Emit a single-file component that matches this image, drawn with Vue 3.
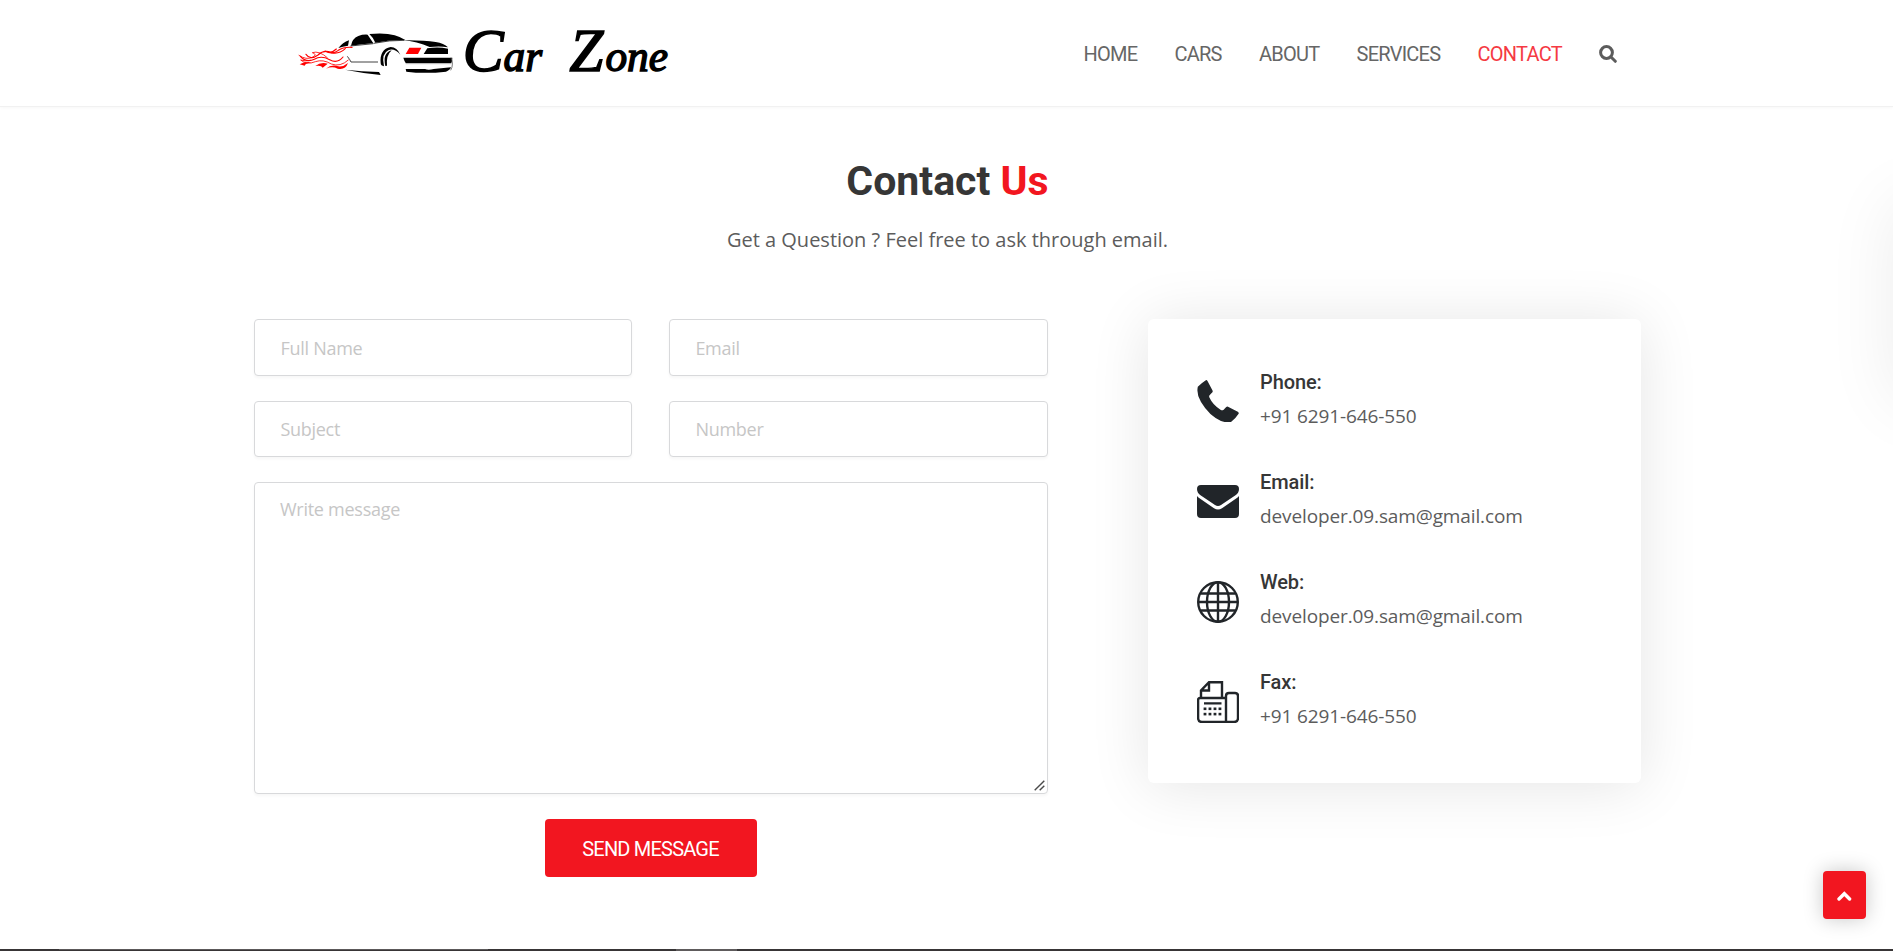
<script setup>
const links = ['HOME', 'CARS', 'ABOUT', 'SERVICES', 'CONTACT']
const fields = ['Full Name', 'Email', 'Subject', 'Number']
const contacts = [
  { icon: 'phone', label: 'Phone:', value: '+91 6291-646-550' },
  { icon: 'mail', label: 'Email:', value: 'developer.09.sam@gmail.com' },
  { icon: 'web', label: 'Web:', value: 'developer.09.sam@gmail.com' },
  { icon: 'fax', label: 'Fax:', value: '+91 6291-646-550' },
]
const dots = [0, 14.4, 29, 43.4]
</script>

<template>
  <div class="page">
    <header class="header">
      <svg class="logo" viewBox="0 0 1170 180" aria-label="Car Zone">
        <g fill="#000">
          <path d="M145 84 Q158 68 177 61 L174 77 Q158 79 145 84Z" />
          <path d="M183 77 Q186 56 205 48 Q218 43 233 44 L250 70 Q215 73 183 77Z" />
          <path d="M238 42 Q285 37 314 46 Q334 52 346 60 Q302 58 256 68 Q251 54 238 42Z" />
          <path d="M337 61 Q400 60 437 66 Q462 70 474 82 Q452 78 419 81 Q382 64 337 61Z" />
          <path d="M412 85 Q445 80 474 86 V102 H401Z" />
          <path d="M340 113 H487 Q487 123 484 129 H347 Q343 123 340 113Z" />
          <path d="M347 147 H405 Q415 152 431 147 L483 142 Q480 151 468 155 Q405 162 349 155Z" />
          <path d="M165 149 Q215 154 267 156 L272 165 Q220 160 165 149Z" />
          <path d="M272 129 Q268 88 302 81 Q321 81 331 104 Q312 83 295 91 Q273 101 282 139 Q272 137 272 129Z" />
          <path d="M286 138 Q277 99 305 91 Q288 106 291 137Z" />
        </g>
        <g fill="none" stroke="#111" stroke-width="2.4">
          <path d="M172 109 Q180 119 183 126 H264 M181 78 L250 71 M251 70 Q300 60 343 61" />
          <path d="M483 113 Q492 133 482 151" stroke="#555" />
          <path d="M347 131 H484" stroke="#999" />
        </g>
        <path d="M358 83 H394 L384 102 H347Z" fill="#f00" />
        <g fill="none" stroke="#f00" stroke-linecap="round">
          <path d="M186 82 Q161 80 145 91 Q128 105 104 93 Q123 103 139 87" stroke-width="3.4" />
          <path d="M166 86 Q146 104 124 98 Q102 88 84 105 Q61 122 48 103" stroke-width="3.4" />
          <path d="M159 111 Q142 132 119 119 Q93 105 73 118 Q49 129 31 109" stroke-width="3.4" />
          <path d="M112 113 Q87 91 67 98 Q84 104 67 112 Q49 121 27 106" stroke-width="2.4" />
          <path d="M175 120 Q151 142 124 132 Q99 117 76 125 Q50 136 32 120 Q46 125 62 121" stroke-width="2.5" />
        </g>
        <g fill="#f00">
          <path d="M29 133 Q45 124 65 127 Q48 129 44 137Z" />
          <path d="M76 138 Q92 125 113 131 L98 143 Q94 135 76 138Z" />
          <path d="M108 146 Q124 132 145 139 Q160 141 174 129 Q166 151 143 146 Q127 138 108 146Z" />
        </g>
        <text class="logo-word" x="518" y="152"><tspan class="cap">C</tspan><tspan>ar</tspan></text>
        <text class="logo-word" x="838" y="152"><tspan class="cap">Z</tspan><tspan dx="6">one</tspan></text>
      </svg>
      <nav class="nav">
        <a v-for="l in links" :key="l" :class="{ active: l === 'CONTACT' }">{{ l }}</a>
        <svg class="search" viewBox="0 0 18 18"><circle cx="7.5" cy="7.5" r="5.9" /><path d="M12 12 L16.3 16.3" /></svg>
      </nav>
    </header>

    <main class="main">
      <h1>Contact <span>Us</span></h1>
      <p class="lead">Get a Question ? Feel free to ask through email.</p>
      <div class="columns">
        <form class="form" @submit.prevent>
          <input v-for="f in fields" :key="f" type="text" :placeholder="f" />
          <div class="message">
            <textarea placeholder="Write message"></textarea>
            <svg class="grip" viewBox="0 0 11 11"><path d="M.7 10.3 L10.3 .7 M5.7 10.3 L10.3 5.7" /></svg>
          </div>
          <button type="submit">SEND MESSAGE</button>
        </form>
        <section class="card">
          <div v-for="c in contacts" :key="c.label" class="item">
            <svg class="icon" viewBox="0 0 42 42">
              <path v-if="c.icon === 'phone'" d="M9.2 0 Q5 2.7 .8 6.7 Q-.8 14.5 4 22 Q12 35.5 24 41 Q29.5 43 34 42 Q39.5 37.5 41.8 33.6 Q41.8 32.3 40.8 31.7 L31 26.7 Q30 26.3 29 27.3 L26.4 30 Q25 30.7 23.5 29.7 Q15.5 24.5 12.3 17.2 Q11.8 15.7 13 14.7 L15.4 12.3 Q16 11.5 15.4 10.3 L10.5 .9 Q10 0 9.2 0Z" />
              <g v-else-if="c.icon === 'mail'">
                <path d="M4 5 H38 Q42 5 42 9 Q42 12.9 38.5 15.2 L24 25 Q21 26.9 18 25 L3.5 15.2 Q0 12.9 0 9 Q0 5 4 5Z" />
                <path d="M0 16 Q1 17.2 2.5 18.2 L17 28.2 Q21 30.6 25 28.2 L39.5 18.2 Q41 17.2 42 16 V34 Q42 38 38 38 H4 Q0 38 0 34Z" />
              </g>
              <g v-else-if="c.icon === 'web'" class="line">
                <circle cx="21" cy="21" r="19.8" /><ellipse cx="21" cy="21" rx="11" ry="19.8" />
                <path d="M21 1 V41 M1 21 H41 M3.5 12.5 H38.5 M3.5 29.5 H38.5" />
              </g>
              <g v-else class="line">
                <path d="M29 17 H3 Q1.1 17 1.1 19 V37 Q1.1 41 5 41 H37 Q41 41 41 37 V15 Q41 12 38 12 H32 Q29 12 29 15 V41" />
                <path d="M4 17 V9.5 L12 1.2 H25 V17 M4 9.5 H12 V1.2 M7 22.4 H24.5" />
                <g class="dots">
                  <template v-for="x in dots" :key="x">
                    <rect :x="6.6 + x / 2.904" y="26.5" width="2.8" height="2.6" />
                    <rect :x="6.6 + x / 2.904" y="31.8" width="2.8" height="2.6" />
                  </template>
                </g>
              </g>
            </svg>
            <div class="detail">
              <h4>{{ c.label }}</h4>
              <p>{{ c.value }}</p>
            </div>
          </div>
        </section>
      </div>
    </main>

    <footer class="footer"><i class="edge"></i><i class="block"></i></footer>
    <div class="drawer"></div>
    <button class="to-top" aria-label="Back to top">
      <svg viewBox="0 0 15 10"><path d="M2 8 L7.3 2.7 L12.6 8" /></svg>
    </button>
  </div>
</template>

<style>
body { margin: 0; }
</style>

<style scoped>
* { box-sizing: border-box; }
.page { position: relative; width: 1893px; height: 951px; overflow: hidden; background: #fff; display: flex; flex-direction: column; font-family: "Open Sans", sans-serif; }
.header { height: 107px; flex: none; padding: 0 276px 0 290px; border-bottom: 1px solid #f1f1f1; box-shadow: 0 1px 3px rgba(0, 0, 0, .03); display: flex; justify-content: space-between; align-items: center; }
.logo { width: 390px; height: 60px; margin-top: -7px; overflow: visible; }
.logo-word { font: italic 130px "Liberation Serif", serif; fill: #000; stroke: #000; stroke-width: 4.5px; }
.logo-word .cap { font-size: 184px; }
.nav { display: flex; align-items: center; gap: 37.2px; margin-top: 1px; font: 400 20px/24px Roboto, sans-serif; letter-spacing: -.75px; color: #666; }
.nav .active { color: #f53a43; }
.search { width: 18px; height: 18px; fill: none; stroke: #5c5c5c; stroke-width: 3; stroke-linecap: round; }
.main { flex: 1; display: flex; flex-direction: column; align-items: center; }
h1 { margin: 49px 0 0 2px; font: 700 41px/50px Roboto, sans-serif; color: #363636; }
h1 span { color: #f21620; }
.lead { margin: 19px 0 0 2px; font-size: 20px; line-height: 30px; color: #5c5c5c; }
.columns { width: 1387px; margin: 64px 0 0 2px; display: flex; justify-content: space-between; align-items: flex-start; }
.form { width: 794px; display: grid; grid-template-columns: 378px 379px; column-gap: 37px; row-gap: 25px; grid-template-rows: 57px 56px 312px 58px; }
input, textarea { width: 100%; height: 100%; border: 1px solid #d8d9db; border-radius: 4px; padding: 0 25.4px; background: #fff; font: 400 18px/27px "Open Sans", sans-serif; letter-spacing: -.27px; outline: none; box-shadow: 0 2px 3px rgba(0, 0, 0, .035); }
.message { grid-column: 1 / 3; position: relative; }
textarea { padding: 13px 25px; resize: none; display: block; }
.grip { position: absolute; right: 3px; bottom: 3px; width: 11px; height: 11px; fill: none; stroke: #4a4a4a; stroke-width: 1.4; }
::placeholder { color: #c6c6c6; opacity: 1; }
.form button { grid-column: 1 / 3; justify-self: center; width: 212px; padding: 2px 1px 0 0; border: 0; border-radius: 4px; background: #f21620; color: #fff; font: 400 20px/24px Roboto, sans-serif; letter-spacing: -.8px; }
.card { width: 493px; height: 464px; border-radius: 6px; background: #fff; box-shadow: 0 3px 60px rgba(0, 0, 0, .105); padding: 46px 49px; }
.item { display: flex; align-items: center; gap: 21px; height: 73px; margin-bottom: 27.3px; }
.icon { width: 42px; height: 42px; margin-top: -1px; fill: #212529; }
.line { fill: none; stroke: #212529; stroke-width: 2.4; }
.dots { fill: #212529; stroke: none; }
.detail { margin-top: -4px; }
h4 { margin: 0 0 4px; font: 500 20px/28px Roboto, sans-serif; letter-spacing: -.1px; color: #363636; }
.item p { margin: 0; font-size: 19px; line-height: 32px; letter-spacing: -.12px; color: #5c5c5c; }
.footer { height: 2px; flex: none; background: #383536; display: flex; }
.edge { width: 429px; margin-left: 59px; height: 1px; background: #5c595a; }
.block { width: 61px; margin-left: 188px; height: 2px; background: #5e5b5c; }
.drawer { position: absolute; left: 1893px; top: 202px; width: 200px; height: 200px; box-shadow: 0 0 65px rgba(0, 0, 0, .075); }
.to-top { position: absolute; left: 1823px; top: 871px; width: 43px; height: 48px; border: 0; border-radius: 4px; padding: 0; background: #f21620; box-shadow: 0 0 20px rgba(0, 0, 0, .22); display: flex; align-items: center; justify-content: center; }
.to-top svg { width: 15px; height: 10px; margin-top: 2px; fill: none; stroke: #fff; stroke-width: 3.4; stroke-linecap: round; }
</style>
